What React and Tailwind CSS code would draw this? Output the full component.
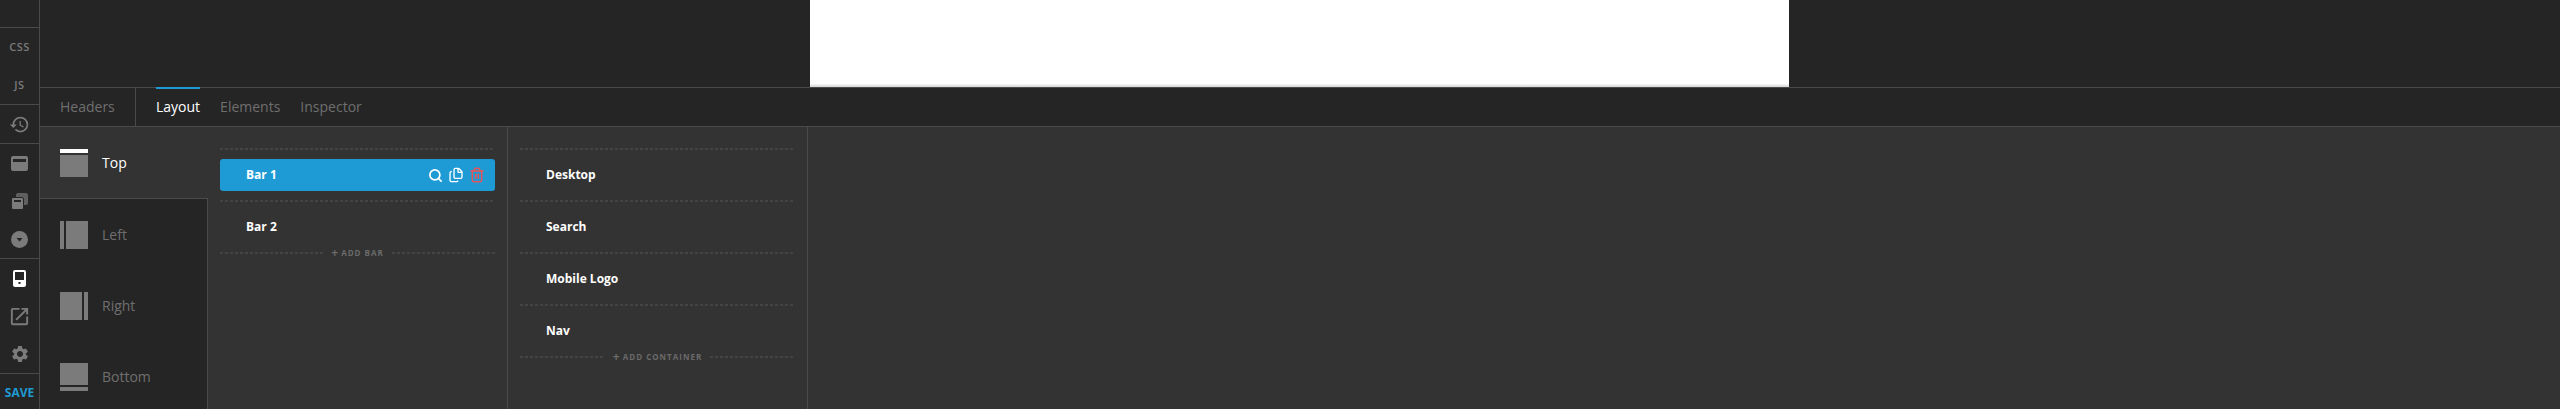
import { Search, Files, Trash2 } from 'lucide-react'
import { MdHistory, MdOpenInNew, MdSettings } from 'react-icons/md'

const SideCell = ({ children, className = 'h-[38px]' }) => (
  <div className={`flex items-center justify-center ${className}`}>{children}</div>
)

const PositionIcon = ({ side }) => (
  <div className="flex h-7 w-7 shrink-0">
    {side === 'top' && (
      <div className="flex w-7 flex-col gap-[2px]">
        <div className="h-1 bg-white" />
        <div className="flex-1 bg-[#7b7b7b]" />
      </div>
    )}
    {side === 'left' && (
      <div className="flex w-7 gap-[2px]">
        <div className="w-1 bg-[#7b7b7b]" />
        <div className="flex-1 bg-[#7b7b7b]" />
      </div>
    )}
    {side === 'right' && (
      <div className="flex w-7 gap-[2px]">
        <div className="flex-1 bg-[#7b7b7b]" />
        <div className="w-1 bg-[#7b7b7b]" />
      </div>
    )}
    {side === 'bottom' && (
      <div className="flex w-7 flex-col gap-[2px]">
        <div className="flex-1 bg-[#7b7b7b]" />
        <div className="h-1 bg-[#7b7b7b]" />
      </div>
    )}
  </div>
)

const Position = ({ side, label, active }) => (
  <div
    className={`flex h-[71px] shrink-0 items-center gap-[14px] pl-5 text-sm ${
      active ? 'bg-[#333333] text-white' : 'text-[#6f6f6f]'
    }`}
  >
    <PositionIcon side={side} />
    <span>{label}</span>
  </div>
)

const Dots = () => (
  <div className="h-[2px] flex-1 bg-[repeating-linear-gradient(90deg,#444444_0_3px,transparent_3px_5px)]" />
)

const Line = () => (
  <div className="flex">
    <Dots />
  </div>
)

const Row = ({ label, selected }) => (
  <div
    className={`my-[9px] flex h-8 items-center justify-between rounded-[3px] pl-[26px] pr-[10px] text-xs font-bold text-white ${
      selected ? 'bg-[#1e9bd4]' : ''
    }`}
  >
    <span>{label}</span>
    {selected && (
      <span className="flex items-center gap-[5px]">
        <Search size={15} strokeWidth={2.75} />
        <Files size={16} strokeWidth={2} />
        <Trash2 size={16} strokeWidth={2.25} className="text-[#e8555a]" />
      </span>
    )}
  </div>
)

const AddRow = ({ label }) => (
  <div className="mt-[-3px] flex h-2 items-center gap-2">
    <Dots />
    <span className="flex items-center gap-[2px] text-[8px] font-bold leading-none tracking-[1px] text-[#6a6a6a]">
      <span className="text-[12px] leading-none">+</span>
      {label}
    </span>
    <Dots />
  </div>
)

const App = () => (
  <div className="flex h-[409px] w-[2560px] overflow-hidden bg-[#252525] font-['Open_Sans',sans-serif]">
    <div className="flex w-10 shrink-0 flex-col border-r border-[#4a4a4a] bg-[#252525] text-[#7b7b7b]">
      <div className="h-[28px] border-b border-[#4a4a4a]" />
      <div className="flex h-[77px] flex-col border-b border-[#4a4a4a] pt-[10px] text-[11px] font-semibold tracking-[0.5px]">
        <SideCell className="h-[18px]">CSS</SideCell>
        <SideCell className="mt-5 h-[18px]">JS</SideCell>
      </div>
      <SideCell className="h-[39px] border-b border-[#4a4a4a]">
        <MdHistory size={21} />
      </SideCell>
      <SideCell>
        <div className="flex h-[15px] w-[17px] flex-col rounded-[2px] bg-[#7b7b7b] p-[2px] pt-[3px]">
          <div className="h-[3px] bg-[#252525]" />
        </div>
      </SideCell>
      <SideCell>
        <div className="relative h-[17px] w-[17px]">
          <div className="absolute right-0 top-0 h-3 w-3 rounded-[2px] bg-[#5f5f5f]" />
          <div className="absolute bottom-0 left-0 flex h-[13px] w-[13px] flex-col rounded-[2px] border border-[#252525] bg-[#7b7b7b] p-[2px]">
            <div className="h-[2px] bg-[#252525]" />
          </div>
        </div>
      </SideCell>
      <SideCell className="h-[39px] border-b border-[#4a4a4a]">
        <svg width="17" height="17" viewBox="0 0 17 17">
          <circle cx="8.5" cy="8.5" r="8.5" fill="#7b7b7b" />
          <path d="M5.5 7h6l-3 3.5z" fill="#252525" />
        </svg>
      </SideCell>
      <SideCell>
        <svg width="13" height="17" viewBox="0 0 13 17">
          <rect width="13" height="17" rx="2" fill="#fff" />
          <rect x="2" y="2" width="9" height="8" fill="#252525" />
          <rect x="5.5" y="12" width="2" height="2" fill="#252525" />
        </svg>
      </SideCell>
      <SideCell>
        <MdOpenInNew size={23} />
      </SideCell>
      <SideCell className="h-[39px] border-b border-[#4a4a4a]">
        <MdSettings size={20} />
      </SideCell>
      <div className="flex flex-1 items-center justify-center pt-[3px] text-xs font-bold text-[#1e9bd4]">SAVE</div>
    </div>

    <div className="flex min-w-0 flex-1 flex-col">
      <div className="flex h-[88px] shrink-0 justify-center border-b border-[#4a4a4a]">
        <div className="ml-[-1px] h-full w-[979px] bg-gradient-to-b from-white from-[96%] to-[#d4d4d4]" />
      </div>
      <div className="flex h-[39px] shrink-0 items-center border-b border-[#4a4a4a] text-sm text-[#6f6f6f]">
        <div className="flex h-full w-24 items-center border-r border-[#4a4a4a] pl-5">Headers</div>
        <div className="relative ml-5 flex h-full items-center text-white">
          <div className="absolute -top-px left-0 right-0 h-[2px] bg-[#1e9bd4]" />
          Layout
        </div>
        <div className="ml-5">Elements</div>
        <div className="ml-5">Inspector</div>
      </div>
      <div className="flex min-h-0 flex-1 bg-[#333333]">
        <div className="flex w-[168px] shrink-0 flex-col">
          <Position side="top" label="Top" active />
          <div className="min-h-0 flex-1 overflow-hidden border-r border-t border-[#4a4a4a] bg-[#252525]">
            <Position side="left" label="Left" />
            <Position side="right" label="Right" />
            <Position side="bottom" label="Bottom" />
          </div>
        </div>
        <div className="w-[300px] shrink-0 border-r border-[#4a4a4a] px-3 pt-[21px]">
          <Line />
          <Row label="Bar 1" selected />
          <Line />
          <Row label="Bar 2" />
          <AddRow label="ADD BAR" />
        </div>
        <div className="w-[300px] shrink-0 border-r border-[#4a4a4a] px-3 pt-[21px]">
          <Line />
          <Row label="Desktop" />
          <Line />
          <Row label="Search" />
          <Line />
          <Row label="Mobile Logo" />
          <Line />
          <Row label="Nav" />
          <AddRow label="ADD CONTAINER" />
        </div>
      </div>
    </div>
  </div>
)

export default App
